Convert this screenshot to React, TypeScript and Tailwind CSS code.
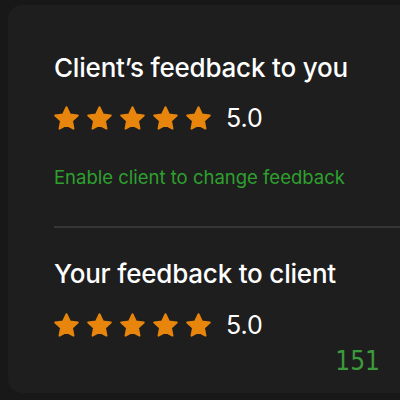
import { useState } from "react";

const Star = () => (
  <svg width="25" height="24" viewBox="1.8 1.6 20.4 19.6" className="shrink-0">
    <path
      d="M12 2.6l2.8 5.9 6.4.8-4.7 4.4 1.2 6.4L12 17l-5.7 3.1 1.2-6.4-4.7-4.4 6.4-.8z"
      fill="#e8850c"
      stroke="#e8850c"
      strokeWidth="1.6"
      strokeLinejoin="round"
    />
  </svg>
);

const Rating = ({ value }: { value: string }) => (
  <div className="flex items-center h-[24px]">
    <div className="flex items-center gap-[8px]">
      {[0, 1, 2, 3, 4].map((i) => (
        <Star key={i} />
      ))}
    </div>
    <span className="ml-[15px] text-[25px] leading-[24px] text-white">{value}</span>
  </div>
);

export default function App() {
  const [editable] = useState(true);

  return (
    <div
      className="w-[400px] h-[400px] overflow-hidden bg-[#181818] pl-2 pt-[5px] pb-[7px]"
      style={{ fontFamily: "Inter, 'Liberation Sans', sans-serif" }}
    >
      <div className="h-full rounded-l-[14px] bg-[#1e1e1e] pl-[46px] pt-[47px]">
        <h2 className="text-[26px] font-medium leading-[32px] text-white tracking-[-0.2px]">
          Client’s feedback to you
        </h2>
        <div className="mt-[22px]">
          <Rating value="5.0" />
        </div>
        {editable && (
          <button className="mt-[36px] block text-[18.5px] text-[#2ea02e] leading-[22px]">
            Enable client to change feedback
          </button>
        )}
        <div className="mt-[38px] h-[2px] bg-[#363636]" />
        <h2 className="mt-[30px] text-[26px] font-medium leading-[32px] text-white tracking-[-0.2px]">
          Your feedback to client
        </h2>
        <div className="mt-[23px]">
          <Rating value="5.0" />
        </div>
        <div className="flex justify-end pr-[20px] mt-[11px]">
          <span
            className="text-[26px] text-[#3c9a3c] leading-[26px]"
            style={{ fontFamily: "'DejaVu Sans Condensed', 'DejaVu Sans', sans-serif" }}
          >
            151
          </span>
        </div>
      </div>
    </div>
  );
}
